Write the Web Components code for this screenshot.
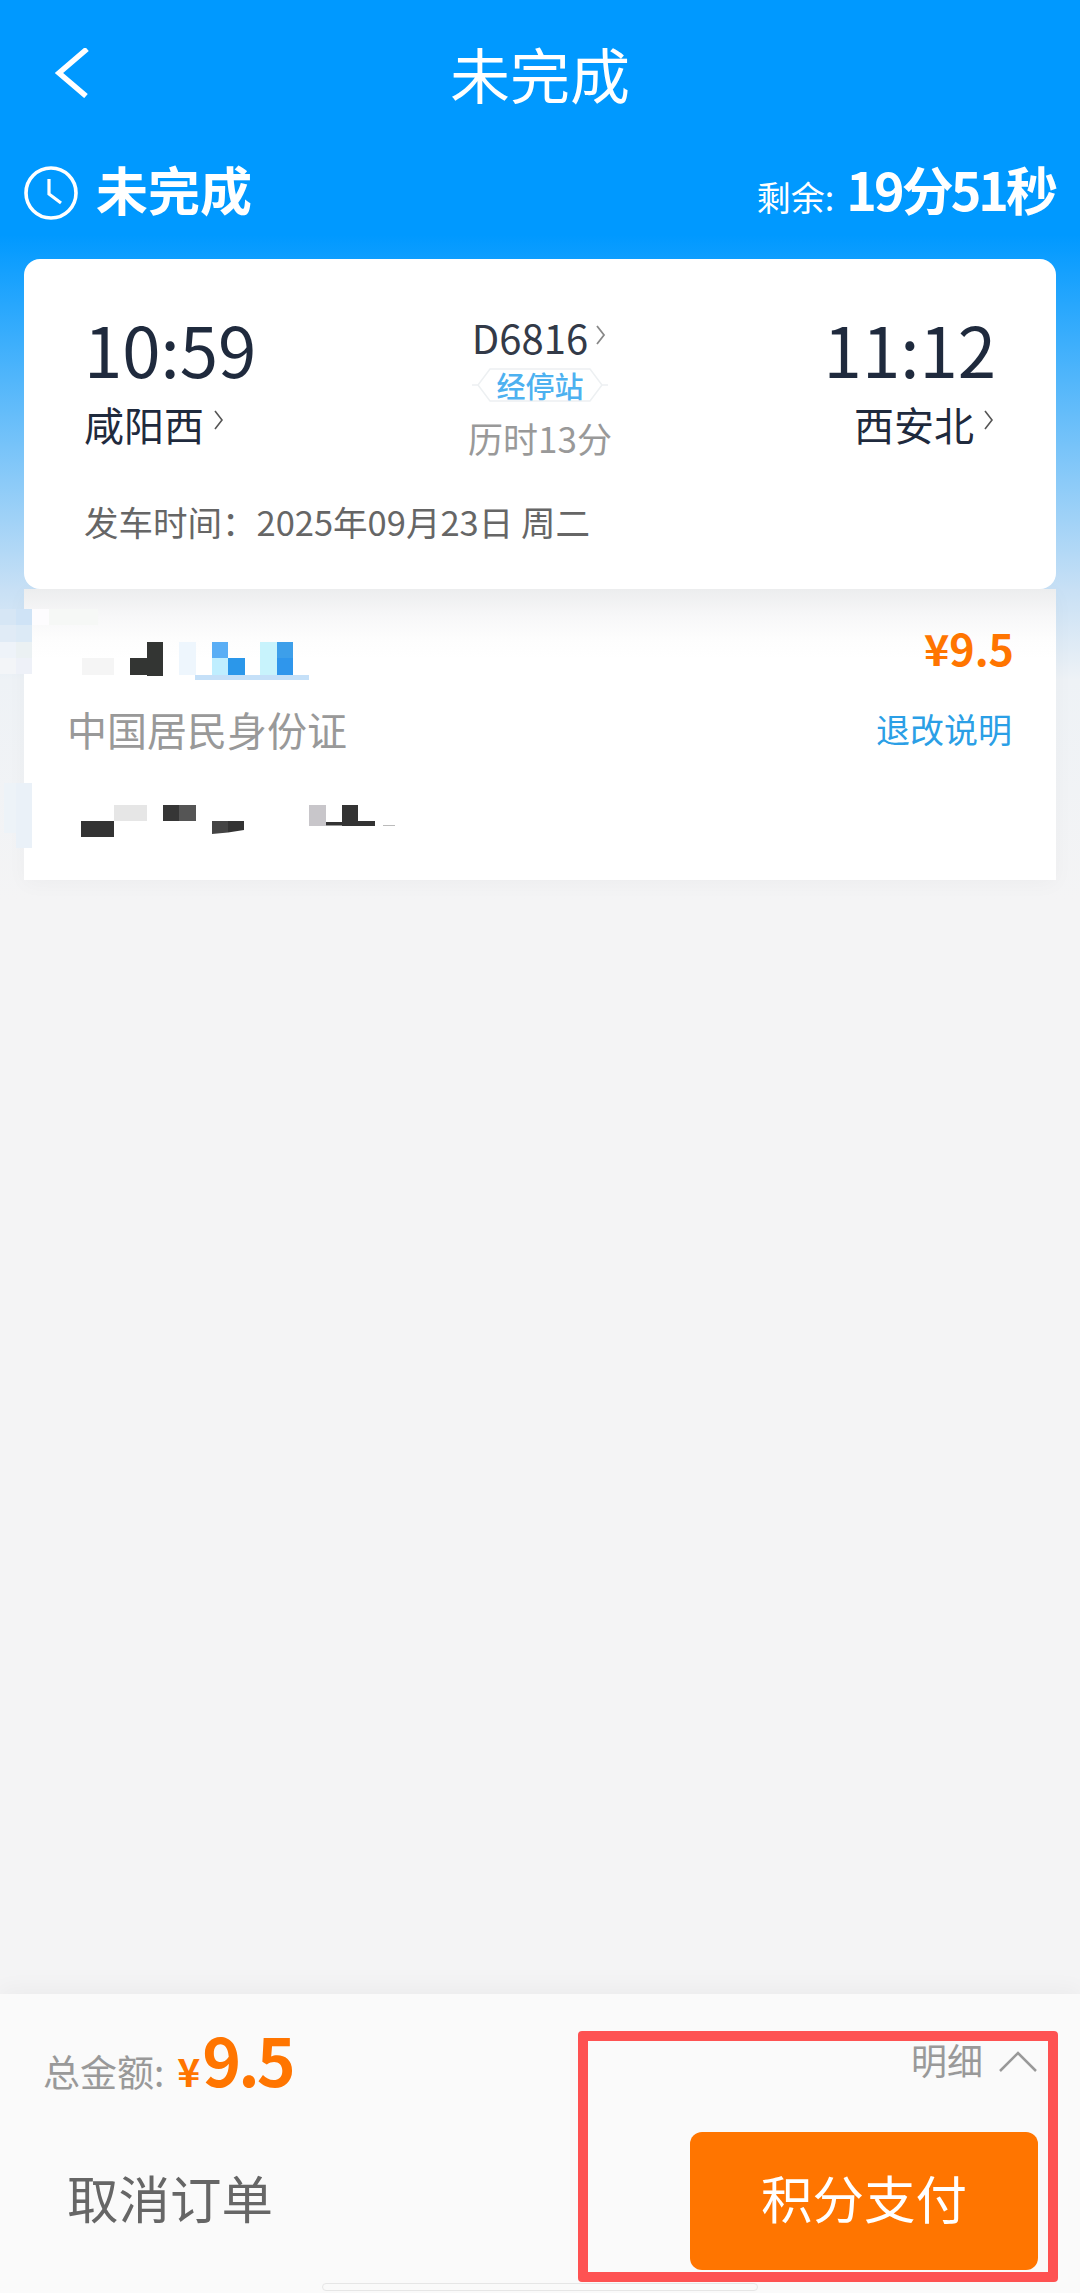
<!DOCTYPE html>
<html lang="zh">
<head>
<meta charset="utf-8">
<title>未完成</title>
<style>
  html, body { margin: 0; padding: 0; }
  body {
    width: 1080px;
    height: 2293px;
    overflow: hidden;
    background: #f4f4f5;
    font-family: "Noto Sans CJK SC", "Noto Sans", sans-serif;
  }
</style>
</head>
<body>
<order-page>
  <nav-bar slot="nav" title="未完成"></nav-bar>
  <status-row slot="nav" status="未完成" left="19分51秒"></status-row>
  <train-card slot="main"></train-card>
  <passenger-card slot="main"></passenger-card>
  <pay-bar slot="bar"></pay-bar>
</order-page>

<script>
const FONT = `"Noto Sans CJK SC", "Noto Sans", sans-serif`;

class OrderPage extends HTMLElement {
  constructor() {
    super();
    this.attachShadow({ mode: "open" });
    this.shadowRoot.innerHTML = `
      <style>
        :host {
          display: flex;
          flex-direction: column;
          height: 2293px;
          font-family: ${FONT};
          background: linear-gradient(180deg, #0099ff 0, #0099ff 235px, #c8e0f5 590px, #eef2f6 680px, #f4f4f5 900px);
        }
        .nav { display: block; flex: none; }
        .main {
          flex: 1;
          display: flex;
          flex-direction: column;
          padding: 0 24px;
        }
        .home {
          width: 434px;
          height: 6px;
          margin: 0 auto;
          border: 1px solid #e6e6e6;
          border-radius: 4px;
          background: #fafafa;
        }
        .foot {
          flex: none;
          position: relative;
          background: #fafafa;
          padding-bottom: 2px;
          box-shadow: 0 -6px 20px rgba(0,0,0,.035);
        }
      </style>
      <div class="nav"><slot name="nav"></slot></div>
      <div class="main"><slot name="main"></slot></div>
      <div class="foot">
        <slot name="bar"></slot>
        <div class="home"></div>
      </div>
    `;
  }
}

class NavBar extends HTMLElement {
  constructor() {
    super();
    this.attachShadow({ mode: "open" });
  }
  connectedCallback() {
    this.shadowRoot.innerHTML = `
      <style>
        :host {
          display: flex;
          align-items: center;
          justify-content: center;
          height: 146px;
          position: relative;
          color: #fff;
          font-size: 60px;
        }
        svg { position: absolute; left: 52px; top: 48px; }
        span { line-height: 1; }
      </style>
      <svg width="40" height="50" viewBox="0 0 40 50" fill="none">
        <path d="M35 1 L7 25 L34 48" stroke="#fff" stroke-width="5.5"/>
      </svg>
      <span>${this.getAttribute("title")}</span>
    `;
  }
}

class StatusRow extends HTMLElement {
  constructor() {
    super();
    this.attachShadow({ mode: "open" });
  }
  connectedCallback() {
    this.shadowRoot.innerHTML = `
      <style>
        :host {
          display: flex;
          align-items: center;
          justify-content: space-between;
          height: 78px;
          box-sizing: border-box;
          padding: 8px 24px 0 24px;
          color: #fff;
        }
        .state { display: flex; align-items: center; gap: 18px; font-size: 52px; font-weight: 700; }
        .state svg { margin-top: 8px; }
        .left { display: flex; align-items: baseline; gap: 12px; font-size: 34px; }
        .left b { font-size: 52px; font-weight: 700; letter-spacing: -3px; margin-right: 1px; }
        span, b { line-height: 1; }
      </style>
      <div class="state">
        <svg width="54" height="54" viewBox="0 0 54 54" fill="none" stroke="#fff" stroke-width="3.6">
          <circle cx="27" cy="27" r="25"/>
          <path d="M25 13 V28 L37 37" stroke-width="3.2"/>
        </svg>
        <span>${this.getAttribute("status")}</span>
      </div>
      <div class="left"><span>剩余:</span><b>${this.getAttribute("left")}</b></div>
    `;
  }
}

class TrainCard extends HTMLElement {
  constructor() {
    super();
    this.attachShadow({ mode: "open" });
    this.shadowRoot.innerHTML = `
      <style>
        :host {
          display: block;
          margin-top: 35px;
          height: 330px;
          box-sizing: border-box;
          padding: 50px 60px 0;
          background: #fff;
          border-radius: 16px;
          position: relative;
          z-index: 1;
          color: #1f2a3d;
        }
        .row { display: flex; justify-content: space-between; height: 170px; }
        .end { display: flex; flex-direction: column; }
        .end.r { align-items: flex-end; }
        .time { font-size: 69px; line-height: 78px; height: 78px; }
        .name { margin-top: 13px; font-size: 40px; line-height: 48px; display: flex; align-items: center; gap: 10px; }
        .name svg { margin-top: -8px; }
        .end.r .name { margin-right: 2px; }
        .mid { display: flex; flex-direction: column; align-items: center; padding-top: 5px; }
        .no { font-size: 40px; line-height: 46px; display: flex; align-items: center; gap: 8px; color: #333a48; margin-right: 2px; }
        .no svg { margin-top: -4px; }
        .stop {
          margin-top: 8px;
          width: 124px;
          height: 34px;
          font-size: 29px;
          line-height: 34px;
          font-weight: 500;
          text-align: center;
          color: #4db1f0;
          position: relative;
        }
        .stop svg { position: absolute; left: -6px; top: 0; }
        .stop span { position: relative; }
        .dur { margin-top: 14px; font-size: 35px; line-height: 44px; color: #999; }
        .date { margin-top: 20px; font-size: 34.5px; line-height: 44px; color: #666; }
        .arrow { flex: none; }
      </style>
      <div class="row">
        <div class="end">
          <div class="time">10:59</div>
          <div class="name">咸阳西<svg class="arrow" width="10" height="20" viewBox="0 0 10 20" fill="none" stroke="#555" stroke-width="1.6"><path d="M1 1 L8 10 L1 19"/></svg></div>
        </div>
        <div class="mid">
          <div class="no">D6816<svg class="arrow" width="10" height="20" viewBox="0 0 10 20" fill="none" stroke="#888" stroke-width="1.8"><path d="M1 1 L8 10 L1 19"/></svg></div>
          <div class="stop">
            <svg width="136" height="34" viewBox="0 0 136 34" fill="none" stroke="#edf0f2" stroke-width="1.5"><path d="M18 1 H118 L130 17 L118 33 H18 L6 17 Z M0 17 H6 M130 17 H136"/></svg>
            <span>经停站</span>
          </div>
          <div class="dur">历时13分</div>
        </div>
        <div class="end r">
          <div class="time">11:12</div>
          <div class="name">西安北<svg class="arrow" width="10" height="20" viewBox="0 0 10 20" fill="none" stroke="#555" stroke-width="1.6"><path d="M1 1 L8 10 L1 19"/></svg></div>
        </div>
      </div>
      <div class="date">发车时间：2025年09月23日 周二</div>
    `;
  }
}

class PassengerCard extends HTMLElement {
  constructor() {
    super();
    this.attachShadow({ mode: "open" });
    this.shadowRoot.innerHTML = `
      <style>
        :host {
          display: block;
          height: 291px;
          background: linear-gradient(180deg, #ecedee 0, #f7f7f8 26px, #fdfdfd 50px, #fff 70px);
          position: relative;
          box-shadow: 0 4px 20px rgba(0,0,0,.03);
        }
        .mosaic { position: absolute; left: -24px; top: 0; overflow: visible; }
        .top, .mid { position: relative; display: flex; justify-content: space-between; align-items: center; padding: 0 42px 0 44px; }
        .top { justify-content: flex-end; height: 116px; }
        .price { color: #ff7500; font-size: 43px; font-weight: 700; line-height: 1; }
        .mid { height: 48px; }
        .idt { color: #999; font-size: 40px; line-height: 1; margin-left: -1px; }
        .rule { color: #2b9fe6; font-size: 34px; line-height: 1; margin-right: 2px; }
      </style>
      <svg class="mosaic" width="424" height="291" viewBox="0 589 424 291">
        <rect x="0" y="609" width="16" height="16" fill="#d6e6f5"/>
        <rect x="16" y="609" width="16" height="16" fill="#cfe3f6"/>
        <rect x="0" y="625" width="16" height="17" fill="#e0ebf6"/>
        <rect x="16" y="625" width="16" height="17" fill="#dceaf6"/>
        <rect x="0" y="642" width="16" height="16" fill="#eef3f9"/>
        <rect x="16" y="642" width="16" height="16" fill="#ebf1f3"/>
        <rect x="0" y="658" width="16" height="16" fill="#f3f5f8"/>
        <rect x="16" y="658" width="16" height="16" fill="#eef1f8"/>
        <rect x="32" y="609" width="17" height="16" fill="#fdfcfe"/>
        <rect x="49" y="609" width="49" height="16" fill="#f6f8f6"/>
        <rect x="16" y="783" width="16" height="65" fill="#eaf1f8"/>
        <rect x="4" y="783" width="12" height="50" fill="#edf3f8"/>
        <rect x="82" y="658" width="32" height="17" fill="#f5f5f5"/>
        <path d="M130 658H147V642H163V676H147V675H130Z" fill="#333533"/>
        <rect x="179" y="642" width="17" height="33" fill="#eef6fd"/>
        <rect x="212" y="642" width="16" height="16" fill="#5aaef5"/>
        <rect x="212" y="658" width="16" height="17" fill="#bfeeff"/>
        <rect x="228" y="658" width="17" height="17" fill="#2b97ea"/>
        <rect x="260" y="642" width="17" height="33" fill="#c8f3fc"/>
        <rect x="277" y="642" width="16" height="16" fill="#3d9fea"/>
        <rect x="277" y="658" width="16" height="17" fill="#2f96ec"/>
        <rect x="195" y="675" width="114" height="5" fill="#c5e0f8"/>
        <rect x="81" y="821" width="33" height="16" fill="#333"/>
        <rect x="114" y="805" width="33" height="16" fill="#e6e6e6"/>
        <rect x="163" y="805" width="16" height="16" fill="#363636"/>
        <rect x="179" y="805" width="17" height="16" fill="#555"/>
        <path d="M212 821H228V832.5L212 834Z" fill="#444"/>
        <path d="M228 821H244V830L228 832.5Z" fill="#333"/>
        <rect x="309" y="805" width="17" height="21" fill="#c8c6ca"/>
        <rect x="326" y="822" width="16" height="3.5" fill="#333"/>
        <rect x="342" y="805" width="16" height="21" fill="#333"/>
        <rect x="358" y="821" width="17" height="5" fill="#333"/>
        <rect x="383" y="825" width="12" height="1" fill="#bbb"/>
      </svg>
      <div class="top"><span class="price">¥9.5</span></div>
      <div class="mid"><span class="idt">中国居民身份证</span><span class="rule">退改说明</span></div>
    `;
  }
}

class PayBar extends HTMLElement {
  constructor() {
    super();
    this.attachShadow({ mode: "open" });
    this.shadowRoot.innerHTML = `
      <style>
        :host {
          display: grid;
          grid-template-columns: 1fr 348px;
          grid-template-rows: 138px 138px;
          height: 289px;
          box-sizing: border-box;
          padding-right: 42px;
          position: relative;
          color: #666;
        }
        .total { display: flex; align-items: baseline; padding: 28px 0 0 43px; color: #999; font-size: 37px; line-height: 72px; }
        .total i { font-style: normal; color: #ff7500; font-weight: 700; font-size: 39px; margin-left: 13px; }
        .total b { color: #ff7500; font-weight: 700; font-size: 66px; letter-spacing: -3px; margin-left: 2px; }
        .more {
          display: flex;
          justify-content: flex-end;
          gap: 15px;
          align-items: flex-start;
          padding-top: 47px;
          color: #999;
          font-size: 36px;
          line-height: 1;
        }
        .cancel { display: flex; align-items: center; padding: 0 0 10px 67px; font-size: 51.5px; color: #666; }
        .pay {
          display: flex;
          align-items: center;
          justify-content: center;
          padding-bottom: 10px;
          background: #ff7500;
          color: #fff;
          border-radius: 12px;
          font-size: 51.5px;
        }
        .mark {
          position: absolute;
          left: 578px;
          top: 37px;
          width: 480px;
          height: 251px;
          box-sizing: border-box;
          border: 10px solid #fe5252;
          border-radius: 4px;
          pointer-events: none;
        }
        svg { margin-top: 10px; }
      </style>
      <div class="total">总金额:<i>¥</i><b>9.5</b></div>
      <div class="more">明细<svg width="40" height="22" viewBox="0 0 40 22" fill="none" stroke="#999" stroke-width="2.5"><path d="M2 20 L20 2 L38 20"/></svg></div>
      <div class="cancel">取消订单</div>
      <div class="pay">积分支付</div>
      <div class="mark"></div>
    `;
  }
}

customElements.define("order-page", OrderPage);
customElements.define("nav-bar", NavBar);
customElements.define("status-row", StatusRow);
customElements.define("train-card", TrainCard);
customElements.define("passenger-card", PassengerCard);
customElements.define("pay-bar", PayBar);
</script>
</body>
</html>
